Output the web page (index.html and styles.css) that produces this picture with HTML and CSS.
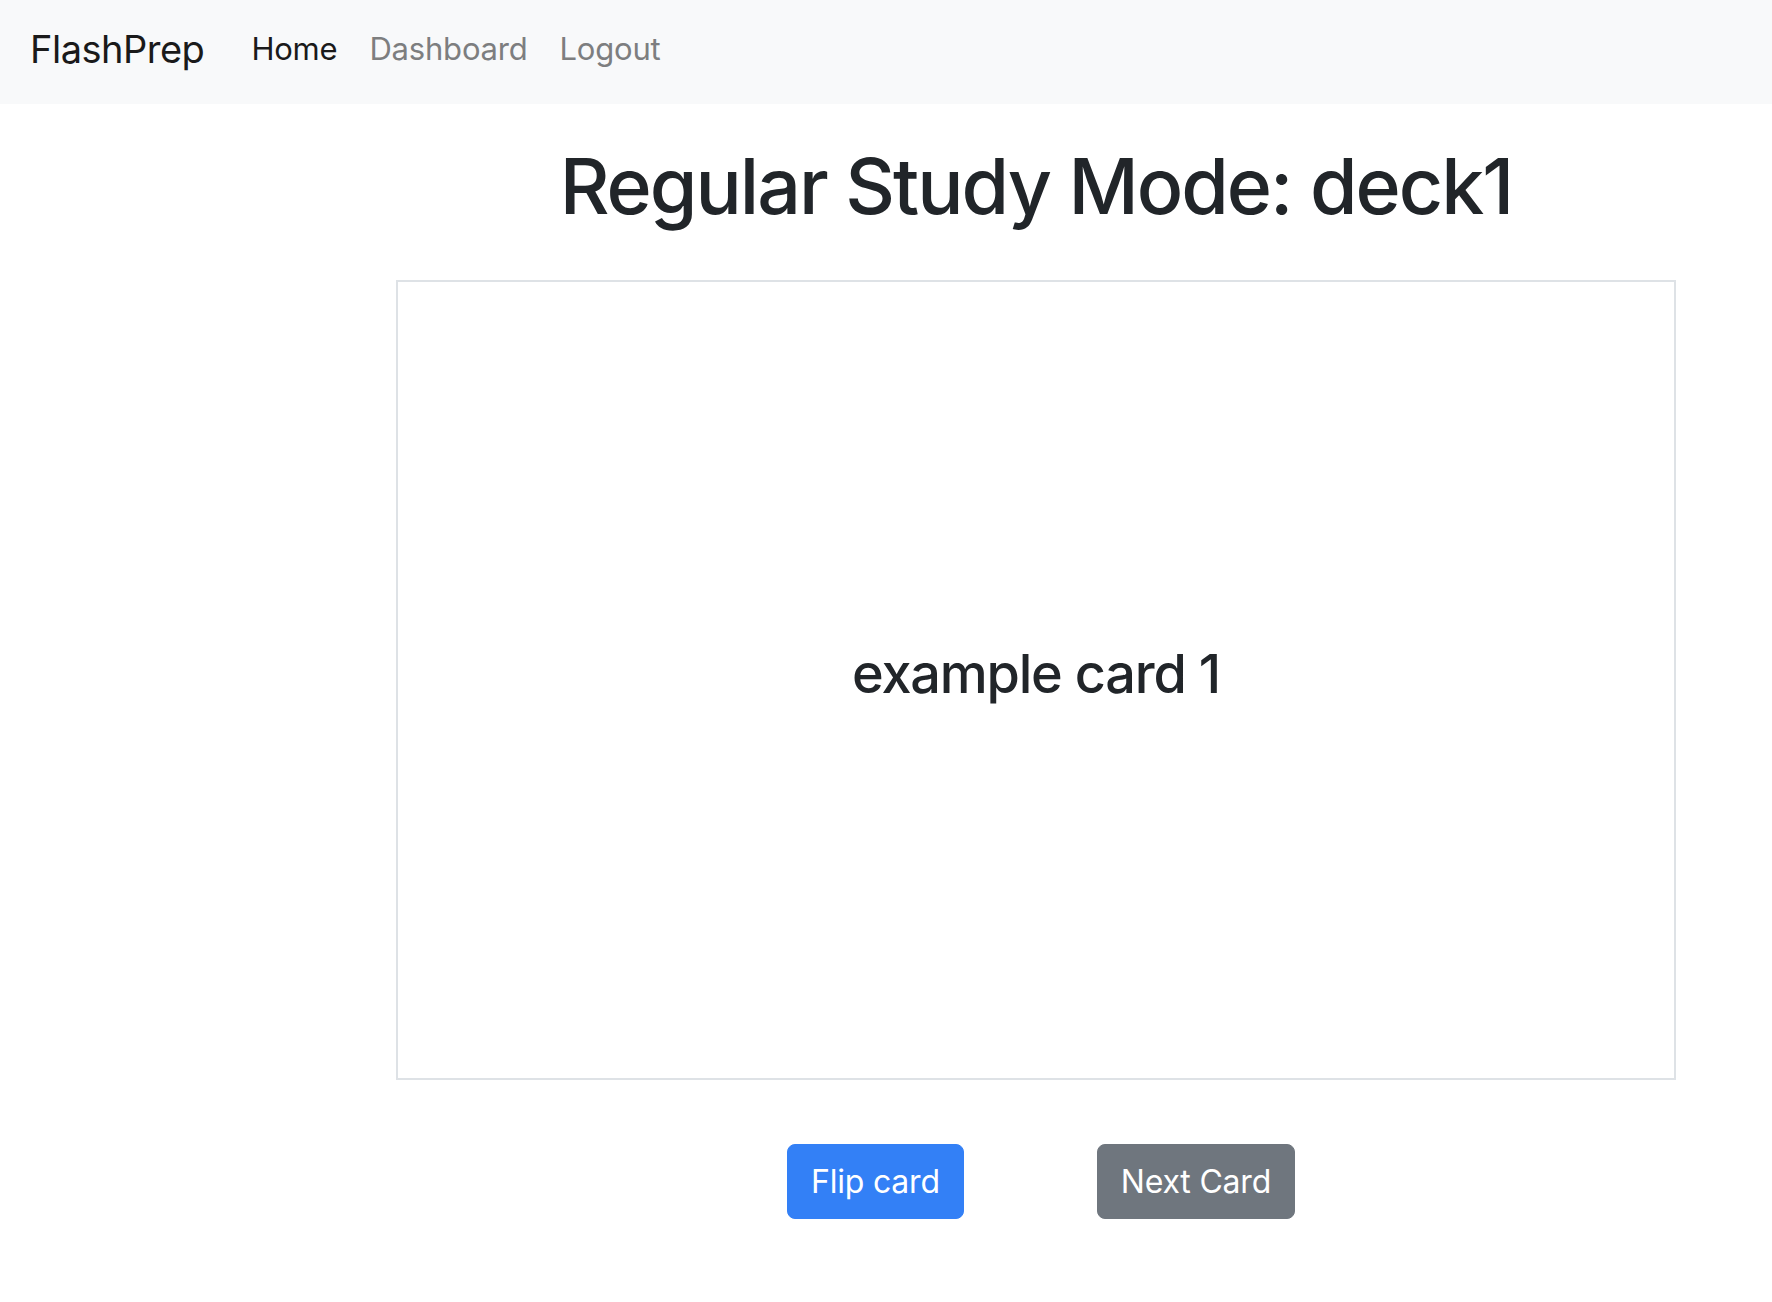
FILE: index.html
```html
<!DOCTYPE html>
<html lang="en">
<head>
<meta charset="utf-8">
<title>FlashPrep</title>
<link rel="stylesheet" href="styles.css">
</head>
<body>
<nav class="navbar">
  <a class="brand" href="#">FlashPrep</a>
  <ul class="nav">
    <li><a class="nav-link active" href="#">Home</a></li>
    <li><a class="nav-link" href="#">Dashboard</a></li>
    <li><a class="nav-link" href="#">Logout</a></li>
  </ul>
</nav>
<main class="main">
  <h1 class="title">Regular Study Mode: deck1</h1>
  <div class="flashcard">
    <h3 class="card-text">example card 1</h3>
  </div>
  <div class="actions">
    <button class="btn btn-primary">Flip card</button>
    <button class="btn btn-secondary">Next Card</button>
  </div>
</main>
</body>
</html>
```

FILE: styles.css
```css
* { box-sizing: border-box; }
html, body { margin: 0; padding: 0; }
body {
  font-family: Inter, "Noto Sans", "Liberation Sans", sans-serif;
  color: #212529;
  background: #ffffff;
  width: 1772px;
  min-height: 1302px;
}
.navbar {
  display: flex;
  align-items: flex-start;
  height: 104px;
  padding: 0 30px;
  background: #f8f9fa;
}
.brand {
  margin-top: 29px;
  margin-right: 31px;
  font-size: 38px;
  line-height: 40px;
  color: #1a1a1a;
  text-decoration: none;
  letter-spacing: -0.5px;
}
.nav {
  display: flex;
  list-style: none;
  margin: 0;
  padding: 0;
}
.nav-link {
  display: block;
  margin-top: 33px;
  padding: 0 16px;
  font-size: 31px;
  line-height: 32px;
  color: #7d7e7f;
  text-decoration: none;
  letter-spacing: -0.2px;
}
.nav-link.active { color: #1a1a1a; }
.main {
  width: 1280px;
  margin-left: 396px;
}
.title {
  margin: 34px 0 46px;
  font-size: 77px;
  font-weight: 500;
  line-height: 96px;
  text-align: center;
  letter-spacing: -2px;
}
.flashcard {
  height: 800px;
  border: 2px solid #dee2e6;
  display: flex;
  align-items: center;
  justify-content: center;
}
.card-text {
  margin: 0 0 12px;
  font-size: 54px;
  font-weight: 500;
  line-height: 64px;
  letter-spacing: -1.2px;
}
.actions {
  display: flex;
  justify-content: center;
  gap: 133px;
  margin-top: 64px;
  padding-left: 10px;
}
.btn {
  font-family: inherit;
  font-size: 32px;
  line-height: 49px;
  padding: 12px 23px;
  border: 1px solid transparent;
  border-radius: 8px;
  color: #ffffff;
  cursor: pointer;
  letter-spacing: -0.2px;
}
.btn-primary { background: #3380f6; border-color: #3380f6; }
.btn-secondary { background: #6f767e; border-color: #6f767e; }
```
